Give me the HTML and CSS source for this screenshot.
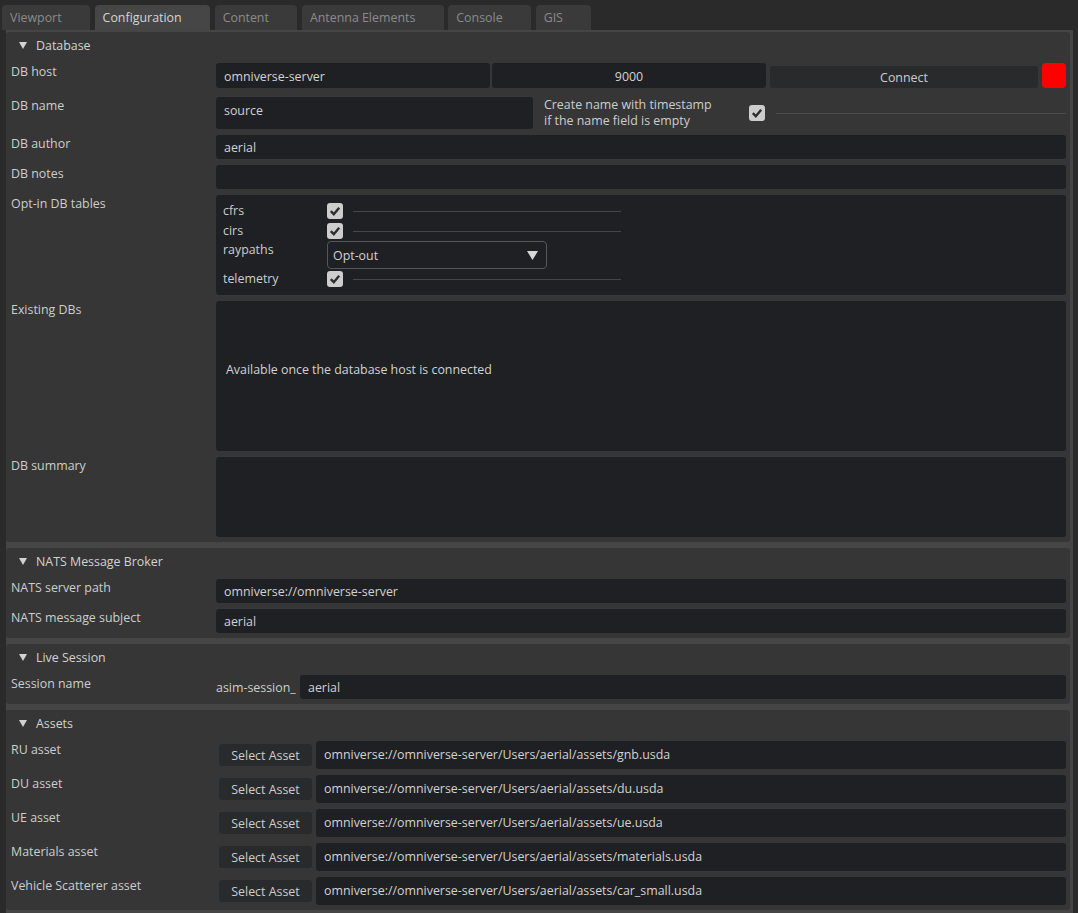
FILE: index.html
```html
<!DOCTYPE html>
<html lang="en">
<head>
  <meta charset="UTF-8">
  <title>Configuration</title>
  <link rel="stylesheet" href="styles.css">
</head>
<body>

  <!-- Window tabs -->
  <div class="tabs">
    <div class="tab">Viewport</div>
    <div class="tab active">Configuration</div>
    <div class="tab">Content</div>
    <div class="tab">Antenna Elements</div>
    <div class="tab">Console</div>
    <div class="tab">GIS</div>
  </div>

  <div class="panel">

    <!-- Database -->
    <div class="frame">
      <div class="frame-head">
        <svg class="arrow" width="8" height="7" viewBox="0 0 8 7"><path d="M0 0H8L4 7Z" fill="#d2d2d2"/></svg>
        Database
      </div>
      <div class="rows">
        <div class="row">
          <div class="label">DB host</div>
          <div class="host">
            <div class="field">omniverse-server</div>
            <div class="field center">9000</div>
            <div class="btn connect">Connect</div>
            <div class="status"></div>
          </div>
        </div>
        <div class="row">
          <div class="label">DB name</div>
          <div class="field name">source</div>
          <div class="note">Create name with timestamp<br>if the name field is empty</div>
          <div class="check">
            <svg width="16" height="16" viewBox="0 0 16 16"><path d="M3.8 8.2L6.8 11.2L12.2 4.8" stroke="#2e2e2e" stroke-width="2.4" fill="none"/></svg>
          </div>
          <div class="rule"></div>
        </div>
        <div class="row">
          <div class="label">DB author</div>
          <div class="field grow">aerial</div>
        </div>
        <div class="row">
          <div class="label">DB notes</div>
          <div class="field grow"></div>
        </div>
        <div class="row">
          <div class="label">Opt-in DB tables</div>
          <div class="tables">
            <div class="trow">
              <div class="tlabel">cfrs</div>
              <div class="check">
                <svg width="16" height="16" viewBox="0 0 16 16"><path d="M3.8 8.2L6.8 11.2L12.2 4.8" stroke="#2e2e2e" stroke-width="2.4" fill="none"/></svg>
              </div>
              <div class="trule"></div>
            </div>
            <div class="trow">
              <div class="tlabel">cirs</div>
              <div class="check">
                <svg width="16" height="16" viewBox="0 0 16 16"><path d="M3.8 8.2L6.8 11.2L12.2 4.8" stroke="#2e2e2e" stroke-width="2.4" fill="none"/></svg>
              </div>
              <div class="trule"></div>
            </div>
            <div class="trow combo-row">
              <div class="tlabel">raypaths</div>
              <div class="combo">
                Opt-out
                <svg width="11" height="9" viewBox="0 0 11 9"><path d="M0 0H11L5.5 9Z" fill="#d6d6d6"/></svg>
              </div>
            </div>
            <div class="trow">
              <div class="tlabel">telemetry</div>
              <div class="check">
                <svg width="16" height="16" viewBox="0 0 16 16"><path d="M3.8 8.2L6.8 11.2L12.2 4.8" stroke="#2e2e2e" stroke-width="2.4" fill="none"/></svg>
              </div>
              <div class="trule"></div>
            </div>
          </div>
        </div>
        <div class="row">
          <div class="label">Existing DBs</div>
          <div class="field grow existing">Available once the database host is connected</div>
        </div>
        <div class="row">
          <div class="label">DB summary</div>
          <div class="field grow summary"></div>
        </div>
      </div>
    </div>

    <!-- NATS -->
    <div class="frame">
      <div class="frame-head">
        <svg class="arrow" width="8" height="7" viewBox="0 0 8 7"><path d="M0 0H8L4 7Z" fill="#d2d2d2"/></svg>
        NATS Message Broker
      </div>
      <div class="rows">
        <div class="row">
          <div class="label">NATS server path</div>
          <div class="field grow">omniverse://omniverse-server</div>
        </div>
        <div class="row">
          <div class="label">NATS message subject</div>
          <div class="field grow">aerial</div>
        </div>
      </div>
    </div>

    <!-- Live session -->
    <div class="frame">
      <div class="frame-head">
        <svg class="arrow" width="8" height="7" viewBox="0 0 8 7"><path d="M0 0H8L4 7Z" fill="#d2d2d2"/></svg>
        Live Session
      </div>
      <div class="rows">
        <div class="row">
          <div class="label">Session name</div>
          <div class="prefix">asim-session_</div>
          <div class="field grow">aerial</div>
        </div>
      </div>
    </div>

    <!-- Assets -->
    <div class="frame">
      <div class="frame-head">
        <svg class="arrow" width="8" height="7" viewBox="0 0 8 7"><path d="M0 0H8L4 7Z" fill="#d2d2d2"/></svg>
        Assets
      </div>
      <div class="rows">
        <div class="row">
          <div class="label">RU asset</div>
          <div class="btn pick">Select Asset</div>
          <div class="field grow path">omniverse://omniverse-server/Users/aerial/assets/gnb.usda</div>
        </div>
        <div class="row">
          <div class="label">DU asset</div>
          <div class="btn pick">Select Asset</div>
          <div class="field grow path">omniverse://omniverse-server/Users/aerial/assets/du.usda</div>
        </div>
        <div class="row">
          <div class="label">UE asset</div>
          <div class="btn pick">Select Asset</div>
          <div class="field grow path">omniverse://omniverse-server/Users/aerial/assets/ue.usda</div>
        </div>
        <div class="row">
          <div class="label">Materials asset</div>
          <div class="btn pick">Select Asset</div>
          <div class="field grow path">omniverse://omniverse-server/Users/aerial/assets/materials.usda</div>
        </div>
        <div class="row">
          <div class="label">Vehicle Scatterer asset</div>
          <div class="btn pick">Select Asset</div>
          <div class="field grow path">omniverse://omniverse-server/Users/aerial/assets/car_small.usda</div>
        </div>
      </div>
    </div>

  </div>

</body>
</html>
```

FILE: styles.css
```css
body {
  margin: 0;
  background-color: #2a2a2a;
  font-family: "Open Sans", sans-serif;
  font-size: 12.4px;
  color: #cdcdcd;
  height: 913px;
  overflow: hidden;
}

/* tabs */
.tabs {
  display: flex;
  gap: 4.5px;
  padding: 5px 0 0 2px;
  height: 25px;
}
.tab {
  height: 25px;
  line-height: 25px;
  padding: 0 28.5px 0 8px;
  background-color: #3a3a3a;
  color: #8b8b8b;
  border-radius: 4px 4px 0 0;
}
.tab.active {
  background-color: #464646;
  color: #d4d4d4;
}

/* main panel */
.panel {
  margin: 0 5px 0 6px;
  background-color: #454545;
  padding: 2px 3px 4px 0;
  display: flex;
  flex-direction: column;
  gap: 6px;
}
.frame {
  background-color: #363636;
  border-radius: 3px;
  padding: 0 4px 5px 5px;
}
.frame-head {
  height: 26px;
  display: flex;
  align-items: center;
  color: #d2d2d2;
  margin-bottom: 5px;
}
.arrow {
  margin: 0 9px 0 8px;
}
.rows {
  display: flex;
  flex-direction: column;
  gap: 6px;
}
.row {
  display: flex;
  align-items: flex-start;
}
.label {
  width: 205px;
  flex: none;
  line-height: 18px;
}

/* inputs */
.field {
  background-color: #1f2023;
  border-radius: 3px;
  height: 25px;
  line-height: 27px;
  padding: 0 8px;
  box-sizing: border-box;
  color: #d2d2d2;
  white-space: nowrap;
}
.field.grow {
  flex: 1;
  height: 24px;
  line-height: 26px;
}
.field.center {
  text-align: center;
}
.btn {
  background-color: #292a2c;
  border-radius: 3px;
  text-align: center;
  color: #cdcdcd;
}

.host {
  flex: 1;
  display: flex;
  height: 28px;
}
.host .field {
  width: 274px;
  flex: none;
}
.host .field + .field {
  margin-left: 2px;
}
.connect {
  flex: 1;
  margin: 3px 4px 0 4px;
  height: 22px;
  line-height: 23px;
}
.status {
  width: 24px;
  height: 25px;
  background-color: #ff0000;
  border-radius: 4px;
}

.field.name {
  width: 317px;
  height: 32px;
  line-height: 28px;
}
.note {
  width: 205px;
  margin-left: 11px;
  line-height: 16px;
}
.check {
  width: 16px;
  height: 16px;
  flex: none;
  background-color: #cdcdcd;
  border-radius: 3px;
}
.check svg {
  display: block;
}
.row > .check {
  margin-top: 8px;
}
.rule {
  flex: 1;
  height: 1px;
  margin: 16px 0 0 11px;
  background-color: #4c4c4c;
}

/* opt-in tables */
.tables {
  flex: 1;
  height: 100px;
  box-sizing: border-box;
  background-color: #1f2023;
  border-radius: 3px;
  padding: 8px 7px;
  display: flex;
  flex-direction: column;
  gap: 2px;
}
.trow {
  display: flex;
  align-items: flex-start;
}
.trow:first-child {
  margin-bottom: 2px;
}
.tlabel {
  width: 104px;
  flex: none;
  line-height: 15px;
}
.combo-row .tlabel {
  line-height: 17px;
}
.trule {
  width: 268px;
  height: 1px;
  margin: 8px 0 0 10px;
  background-color: #45464a;
}
.combo {
  width: 220px;
  height: 28px;
  box-sizing: border-box;
  border: 1px solid #55565a;
  border-radius: 4px;
  padding: 0 8px 0 5px;
  display: flex;
  align-items: center;
  justify-content: space-between;
  color: #d2d2d2;
}

.field.existing {
  height: 150px;
  line-height: 18px;
  padding: 60px 10px 0;
}
.field.summary {
  height: 80px;
}

/* live session */
.prefix {
  width: 84px;
  flex: none;
  line-height: 18px;
  margin-top: 4px;
}

/* assets */
.pick {
  width: 93px;
  height: 22px;
  line-height: 23px;
  margin: 3px 4px 0 3px;
  flex: none;
}
.field.path {
  height: 28px;
  line-height: 27px;
}
```
